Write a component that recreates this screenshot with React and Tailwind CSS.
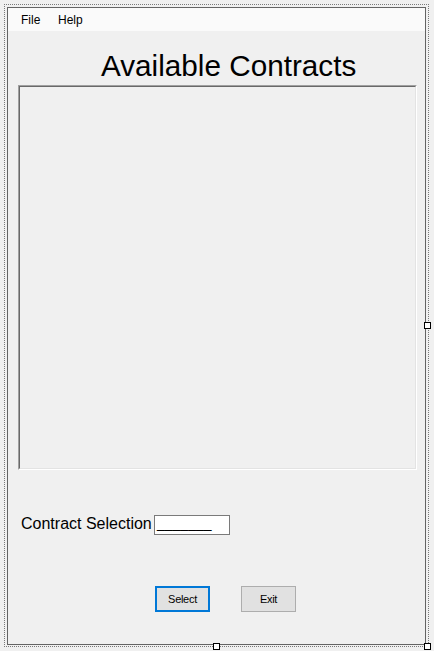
import React from "react";

function Handle({ className }) {
  return <div className={"absolute w-[7px] h-[7px] bg-white border border-black " + className} />;
}

export default function App() {
  return (
    <div
      className="relative w-[434px] h-[651px] bg-[#f0f0f0] overflow-hidden"
      style={{ fontFamily: '"Liberation Sans", Arial, sans-serif' }}
    >
      {/* designer selection frame */}
      <div className="absolute left-[4px] top-[4px] w-[425px] h-[643px] border border-dotted border-[#7a7a7a] pt-[2px] pl-[2px] pr-[2px] pb-[1px]">
        {/* the form */}
        <div className="w-[419px] h-[638px] border border-[#646464] bg-[#f0f0f0] flex flex-col">
          {/* menu strip */}
          <div className="h-[23px] bg-[#fafafa] flex items-center pl-[13px] text-[12px] text-black">
            <span className="w-[37px]">File</span>
            <span>Help</span>
          </div>

          {/* title */}
          <div className="mt-[20px] pl-[93px] text-[29.7px] leading-[30px] text-black whitespace-nowrap">
            Available Contracts
          </div>

          {/* list box */}
          <div className="mt-[4px] ml-[10px] w-[399px] h-[385px] border-t border-l border-[#a0a0a0] border-r-white border-b-white border-r border-b">
            <div className="w-full h-full border-t border-l border-t-[#696969] border-l-[#696969] border-r border-b border-r-[#e3e3e3] border-b-[#e3e3e3] bg-[#f0f0f0]" />
          </div>

          {/* contract selection row */}
          <div className="mt-[45px] pl-[13px] flex items-start h-[20px]">
            <span className="text-[16px] leading-[18px] text-black whitespace-nowrap w-[131px]">
              Contract Selection
            </span>
            <div className="ml-[2px] w-[76px] h-[20px] border border-[#7a7a7a] bg-white pl-[2px] text-[14px] leading-[14px] text-black overflow-hidden">
              _______
            </div>
          </div>

          {/* buttons */}
          <div className="mt-[51px] pl-[147px] flex items-start">
            <button className="w-[55px] h-[26px] border-2 border-[#0078d7] bg-[#e1e1e1] text-[11px] tracking-[-0.3px] text-black flex items-center justify-center">
              Select
            </button>
            <button className="ml-[31px] w-[55px] h-[26px] border border-[#adadad] bg-[#e1e1e1] text-[11px] tracking-[-0.3px] text-black flex items-center justify-center">
              Exit
            </button>
          </div>
        </div>
      </div>

      {/* resize handles */}
      <Handle className="left-[424px] top-[322px]" />
      <Handle className="left-[213px] top-[643px]" />
      <Handle className="left-[424px] top-[643px]" />
    </div>
  );
}
